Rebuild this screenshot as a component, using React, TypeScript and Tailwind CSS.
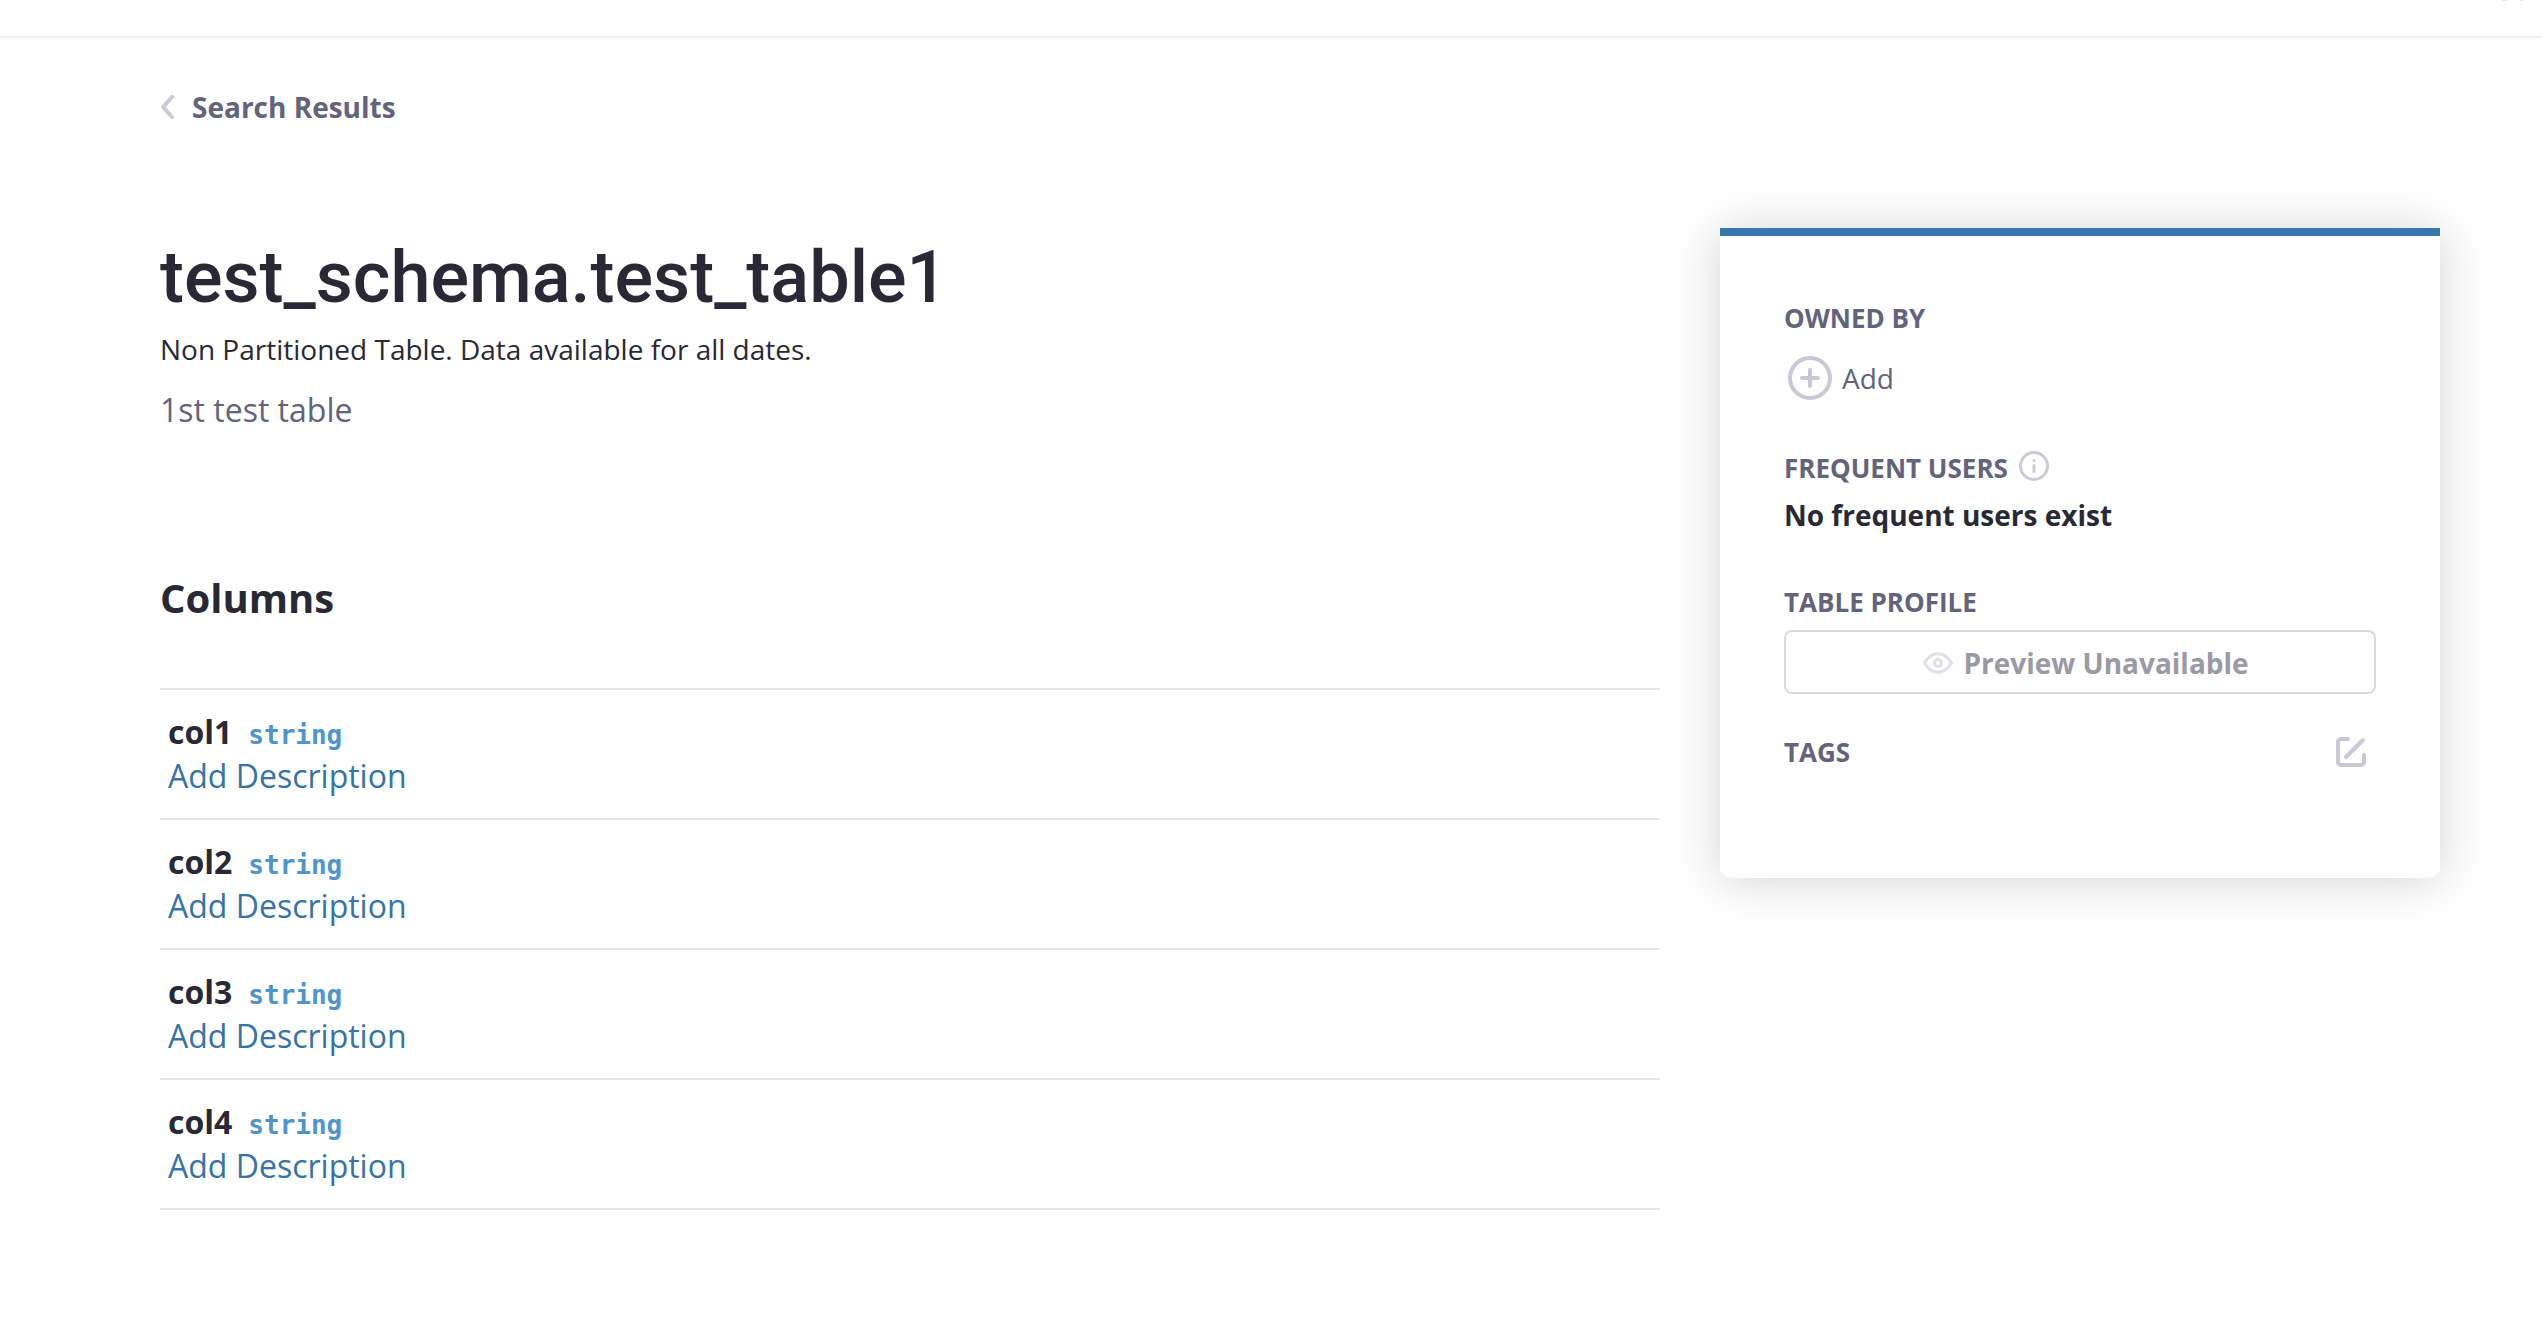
const columns = [
  { name: "col1", type: "string" },
  { name: "col2", type: "string" },
  { name: "col3", type: "string" },
  { name: "col4", type: "string" },
];

function SectionTitle({ children }: { children: React.ReactNode }) {
  return (
    <h3 className="text-[26px] leading-[40px] font-bold text-[#63637b]">
      {children}
    </h3>
  );
}

function ColumnList() {
  return (
    <ul className="mt-[62px] border-b-2 border-[#e6e6e8]">
      {columns.map((column) => (
        <li
          key={column.name}
          className="border-t-2 border-[#e6e6e8] px-2 py-5 text-[32px] leading-[44px]"
        >
          <div className="flex items-baseline gap-4">
            <span className="font-bold">{column.name}</span>
            <span className="font-['DejaVu_Sans_Mono',monospace] text-[26px] leading-[32px] font-bold text-[#4f94cd]">
              {column.type}
            </span>
          </div>
          <button type="button" className="block text-[#3573a8]">
            Add Description
          </button>
        </li>
      ))}
    </ul>
  );
}

function DetailCard() {
  return (
    <aside className="w-[720px] shrink-0 rounded-b-[10px] border-t-8 border-[#3876ae] bg-white px-16 pt-[62px] pb-[106px] shadow-[0_2px_48px_rgba(0,0,0,0.18)]">
      <SectionTitle>OWNED BY</SectionTitle>
      <button
        type="button"
        className="mt-4 flex items-center gap-2.5 pl-1 text-[28px] leading-[48px] text-[#63637b]"
      >
        <svg
          viewBox="0 0 44 44"
          className="size-11"
          fill="none"
          stroke="#c9c8d6"
          strokeWidth="4"
          strokeLinecap="round"
        >
          <circle cx="22" cy="22" r="20" />
          <path d="M22 14v16M14 22h16" />
        </svg>
        Add
      </button>

      <div className="mt-[46px] flex items-start gap-[11px]">
        <SectionTitle>FREQUENT USERS</SectionTitle>
        <svg
          viewBox="0 0 30 30"
          className="mt-[3px] size-[30px]"
          fill="none"
          stroke="#cbcad7"
          strokeWidth="3"
          strokeLinecap="round"
        >
          <circle cx="15" cy="15" r="13.5" />
          <path d="M15 14.5v6M15 9.5v.1" />
        </svg>
      </div>
      <p className="mt-[7px] text-[28px] leading-[40px] font-bold">
        No frequent users exist
      </p>

      <div className="mt-[47px]">
        <SectionTitle>TABLE PROFILE</SectionTitle>
      </div>
      <button
        type="button"
        disabled
        className="mt-2 flex h-16 w-full items-center justify-center gap-2.5 rounded-lg border-2 border-[#dadadd] pt-0.5 pl-3 text-[28px] font-bold text-[#9a99a6]"
      >
        <svg
          viewBox="0 0 30 22"
          className="h-[22px] w-[30px]"
          fill="none"
          stroke="#dfdfe6"
          strokeWidth="3"
        >
          <path d="M1.5 11C5 5 9.5 1.8 15 1.8S25 5 28.5 11C25 17 20.5 20.2 15 20.2S5 17 1.5 11Z" />
          <circle cx="15" cy="11" r="3.5" />
        </svg>
        Preview Unavailable
      </button>

      <div className="mt-[38px] flex items-center justify-between pr-2.5">
        <SectionTitle>TAGS</SectionTitle>
        <button type="button" aria-label="Edit tags">
          <svg
            viewBox="0 0 30 30"
            className="size-[30px]"
            fill="none"
            stroke="#c9c8d6"
            strokeWidth="4"
            strokeLinecap="round"
            strokeLinejoin="round"
          >
            <path d="M12 2H5a3 3 0 0 0-3 3v20a3 3 0 0 0 3 3h20a3 3 0 0 0 3-3v-7" />
            <path d="M27 3 10 20" />
          </svg>
        </button>
      </div>
    </aside>
  );
}

export default function App() {
  return (
    <div className="bg-white font-['Open_Sans',sans-serif] text-[#292936]">
      <header className="flex h-[38px] items-start justify-end border-b-2 border-[#f1f1f2] pr-4">
        <svg
          viewBox="0 0 26 3"
          className="h-[3px] w-[26px]"
          fill="none"
          stroke="#e9e9ec"
          strokeWidth="2"
        >
          <path d="M2 0h5M20 0h3" />
        </svg>
      </header>
      <main className="pr-[102px] pl-40">
        <a
          href="#search"
          className="mt-[49px] inline-flex items-center gap-[18px] text-[28px] leading-[40px] font-bold text-[#63637b]"
        >
          <svg
            viewBox="0 0 14 24"
            className="h-6 w-3.5"
            fill="none"
            stroke="#cbcad7"
            strokeWidth="4"
            strokeLinecap="round"
            strokeLinejoin="round"
          >
            <path d="M12 2 3 12l9 10" />
          </svg>
          Search Results
        </a>

        <div className="mt-[101px] flex items-start gap-[60px]">
          <section className="min-w-0 flex-1 pt-2.5">
            <h1 className="font-[Roboto,sans-serif] text-[72px] leading-[80px] font-medium">
              test_schema.test_table1
            </h1>
            <p className="mt-[11px] text-[28px] leading-[40px]">
              Non Partitioned Table. Data available for all dates.
            </p>
            <p className="mt-[19px] text-[32px] leading-[44px] text-[#63637b]">
              1st test table
            </p>
            <h2 className="mt-[138px] text-[40px] leading-[56px] font-bold">
              Columns
            </h2>
            <ColumnList />
          </section>
          <DetailCard />
        </div>
      </main>
    </div>
  );
}
